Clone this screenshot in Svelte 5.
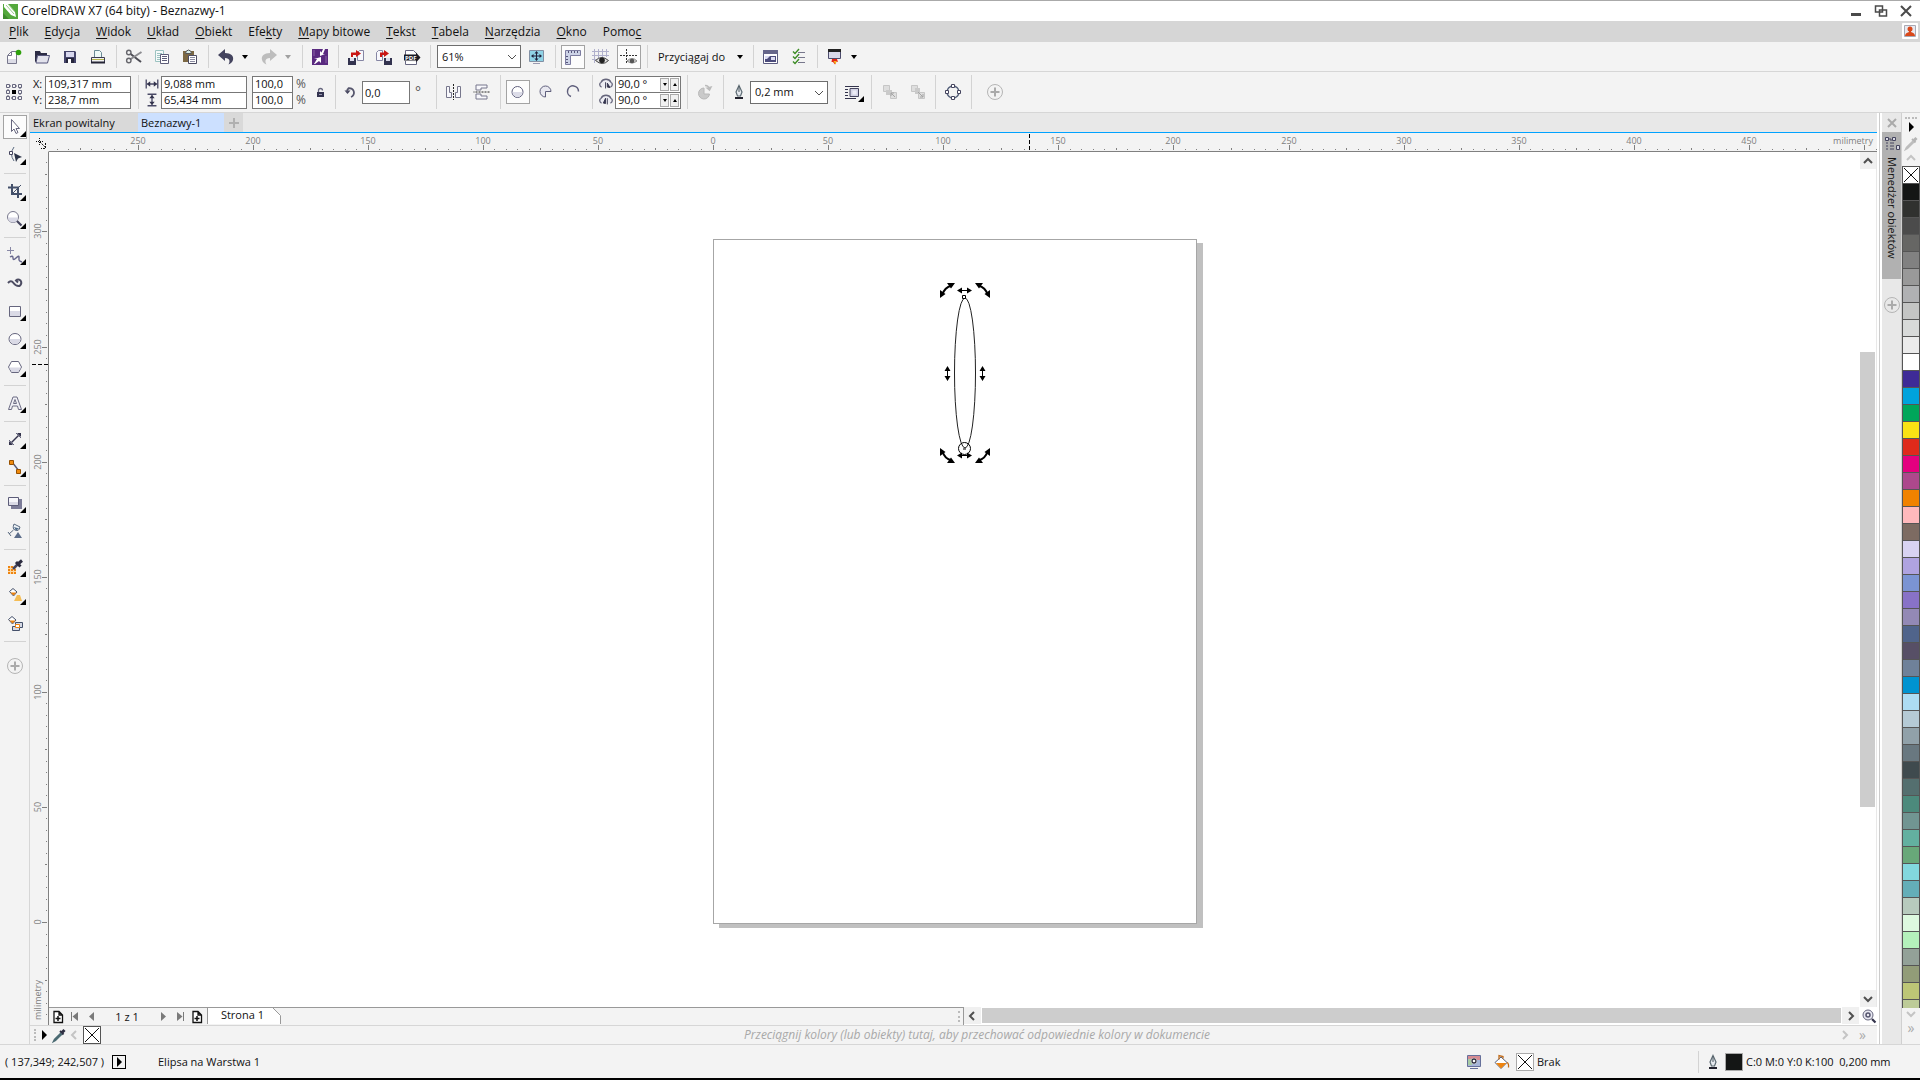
<script lang="ts">
  interface MenuItem {
    pre: string;
    key: string;
    post: string;
  }

  const menu: MenuItem[] = [
    { pre: '', key: 'P', post: 'lik' },
    { pre: '', key: 'E', post: 'dycja' },
    { pre: '', key: 'W', post: 'idok' },
    { pre: '', key: 'U', post: 'kład' },
    { pre: '', key: 'O', post: 'biekt' },
    { pre: 'Efe', key: 'k', post: 'ty' },
    { pre: '', key: 'M', post: 'apy bitowe' },
    { pre: '', key: 'T', post: 'ekst' },
    { pre: '', key: 'T', post: 'abela' },
    { pre: '', key: 'N', post: 'arzędzia' },
    { pre: '', key: 'O', post: 'kno' },
    { pre: 'Pomo', key: 'c', post: '' }
  ];

  // '|' is a separator
  const tools = [
    'pick', 'shape', '|', 'crop', 'zoom', '|', 'freehand', 'media', 'rect', 'ellipse', 'polygon', '|',
    'text', '|', 'dimension', 'connector', '|', 'shadow', 'glass', '|', 'dropper', 'fill', 'smartfill', '|'
  ];
  const noFlyout = ['media', 'glass', 'smartfill'];

  const swatches = [
    '#141615', '#30312f', '#4b4b4b', '#666664', '#818181', '#999999', '#b0b1b3', '#c4c5c4', '#d8dad9',
    '#ebebeb', '#ffffff', '#3e2b97', '#00a3dc', '#00a65a', '#fae214', '#df2a1b', '#e4007f', '#ad488c',
    '#f08200', '#ffb9bc', '#7d6b62', '#d8d3f2', '#afa3e0', '#7b94d3', '#8872c7', '#9389b5', '#50648b',
    '#574f66', '#6f8199', '#0093d0', '#addcf3', '#b5cad5', '#91a1a9', '#697880', '#3f4a4e', '#546f6f',
    '#4c8a7c', '#719592', '#63b0a0', '#68a879', '#82d8de', '#64aeb8', '#b7cabd', '#ddf9df', '#b4f1bb',
    '#93a198', '#929c78', '#bdc676', '#bdcb98'
  ];

  // pixels per millimetre at 61%
  const scale = 2.302;
  const originX = 664;
  const originY = 770;

  function ticks(from: number, to: number) {
    const out: number[] = [];
    for (let mm = from; mm <= to; mm += 5) out.push(mm);
    return out;
  }

  const hTicks = ticks(-285, 505);
  const vTicks = ticks(-45, 330);

  function tickLen(mm: number) {
    if (mm % 50 === 0) return 5;
    return mm % 25 === 0 ? 2 : 1;
  }

  // selection handles: x, y, rotation
  const rotateHandles = [[898.5, 138.5, 0], [933.5, 138.5, 90], [933.5, 303.5, 180], [898.5, 303.5, 270]];
  const skewHandles = [[915.5, 138.5, 0], [915.5, 303.5, 0], [898.5, 221.5, 90], [933.5, 221.5, 90]];

  let x = $state('109,317 mm');
  let y = $state('238,7 mm');
  let width = $state('9,088 mm');
  let height = $state('65,434 mm');
  let scaleX = $state('100,0');
  let scaleY = $state('100,0');
  let angle = $state('0,0');
  let start = $state('90,0 °');
  let end = $state('90,0 °');
  let zoom = $state('61%');
  let outline = $state('0,2 mm');
</script>

{#snippet icon(name: string)}
  <svg class="icon" viewBox="0 0 18 18" aria-hidden="true">
    {#if name === 'new'}
      <path d="M2.500 7.500L6.500 3.500H11.500V15.500H2.500Z" fill="#fff" stroke="#77778c" /><path d="M3 7.500H6.500V4" fill="none" stroke="#77778c" /><path d="M3 11h8v4H3z" fill="#dcdce6" /><circle cx="13.500" cy="4.500" r="2.800" fill="#2fa10c" />
    {:else if name === 'open'}
      <path d="M2 14V3h5l1 2h6v3" fill="#2c2c45" /><path d="M4.500 7.500h12l-2 7.500H3z" fill="#e2e2ec" stroke="#55557a" />
    {:else if name === 'save'}
      <path d="M3 3h11l1 1v11H3z" fill="#44446a" /><path d="M5 4h8v5H5z" fill="#d8d8ee" /><path d="M5 10h8v5H5z" fill="#26263c" /><path d="M7 11h3v4H7z" fill="#fff" />
    {:else if name === 'print'}
      <path d="M5.500 10V2.500h5l2 2V10" fill="#eef8f7" stroke="#6b8b95" /><path d="M2.500 9.500h13v5h-13z" fill="#f2f2f2" stroke="#3c3c50" /><path d="M3 11.500h12" stroke="#b4b44a" /><path d="M2 14.500h14" stroke="#252535" stroke-width="2" />
    {:else if name === 'cut'}
      <path d="M5 5.500l11 8.500" stroke="#4c4c54" stroke-width="2" /><path d="M5 11.500L16.500 4" stroke="#8c8c90" stroke-width="2" /><circle cx="3.800" cy="4.500" r="2.200" fill="none" stroke="#66666c" stroke-width="1.400" /><circle cx="3.800" cy="12.500" r="2.200" fill="none" stroke="#66666c" stroke-width="1.400" />
    {:else if name === 'copy'}
      <path d="M2.500 2.500h8v11h-8z" fill="#f5fafa" stroke="#9cc3c1" /><path d="M4 5.500h5M4 7.500h3M4 9.500h3M4 11.500h3" stroke="#9cc3c1" /><path d="M7.500 6.500h8v9h-8z" fill="#fff" stroke="#5d5d78" /><path d="M9 8.500h5M9 10.500h5M9 12.500h5" stroke="#5d5d78" />
    {:else if name === 'paste'}
      <path d="M2 3h11v11H2z" fill="#7c6843" /><path d="M4.500 5.500q0-3 3-3.500 3 .500 3 3.500z" fill="#d8ede8" stroke="#555" /><path d="M7.500 7.500h8v8h-8z" fill="#fff" stroke="#4c4c62" /><path d="M9 9.500h5M9 11.500h5M9 13.500h5" stroke="#8a8aa0" />
    {:else if name === 'undo' || name === 'redo'}
      <g transform={name === 'redo' ? 'matrix(-1 0 0 1 18 0)' : undefined} fill={name === 'redo' ? '#bdbdbd' : '#43435e'}>
        <path d="M1 7L8 1v4c6 0 9 3 8 7-.500 2-2.500 4-4.500 4.500 1.500-2.500 2-6.500-3.500-6.500v3z" />
      </g>
    {:else if name === 'connect'}
      <path d="M1 1h16v16H1z" fill="#5a2a80" /><path d="M12 1h2l-2 5h2l-5 2V3l1.500 1.500z" fill="#fff" /><path d="M4 16H3l3-5H3l7-2v6l-2-2z" fill="#fff" /><path d="M3 2v6M15 8v7" stroke="#8a63a8" />
    {:else if name === 'import'}
      <path d="M10.500 12.500V4.500l2-2h4v10z" fill="#f7f7fc" stroke="#8686a4" /><path d="M1 10h8v7H1z" fill="#33334f" /><path d="M3 10h4v3H3z" fill="#dcdcec" /><path d="M4 9V4.500h5V2l5 3.500L9 9V7H6v2z" fill="#c91515" />
    {:else if name === 'export'}
      <path d="M1.500 12.500V4.500l2-2h4v10z" fill="#f7f7fc" stroke="#8686a4" /><path d="M9 10h8v7H9z" fill="#33334f" /><path d="M11 10h4v3h-4z" fill="#dcdcec" /><path d="M5 9V4.500h4V2l5 3.500L9 9V7H7v2z" fill="#c91515" />
    {:else if name === 'pdf'}
      <path d="M2.500 7V2.500h8l3 3V7M2.500 13v3.500h11V14" fill="#fff" stroke="#666680" /><path d="M1 6.500h12v-2l4.500 5-4.500 5v-2H1z" fill="#1a1a24" /><text x="2" y="12" class="pdf">PDF</text>
    {:else if name === 'fullscreen'}
      <path d="M1.500 2.500h14v11h-14z" fill="#8fd3e6" stroke="#8290a4" /><path d="M8.500 4v8M4 8h9" stroke="#20203a" /><path d="M8.500 3l2 2.500h-4zM8.500 13l-2-2.500h4zM3 8l2.500-2v4zM14 8l-2.500-2v4z" fill="#20203a" /><path d="M5 15.500h7" stroke="#9a9ab0" />
    {:else if name === 'rulers'}
      <path d="M1.500 2.500h15v5h-10v9h-5z" fill="#ccd2e6" stroke="#7c7ca0" /><path d="M4.500 3v2M7.500 3v2M10.500 3v2M13.500 3v2M2 8.500h2M2 11.500h2M2 14.500h2" stroke="#55557a" />
    {:else if name === 'grid'}
      <path d="M2.500 1v14M6.500 1v14M10.500 1v8M14.500 1v8M0 3.500h17M0 7.500h17M0 11.500h4" stroke="#b1b1cc" />
      <path d="M3.500 12.500q6-6 13 0-6 6-13 0z" fill="#ddd" stroke="#444" /><circle cx="10" cy="12.300" r="2.800" fill="#222" />
    {:else if name === 'guides'}
      <path d="M6.500 1v15M0 7.500h17" stroke="#333" stroke-dasharray="2 1" /><path d="M7 13q5-5 10 0-5 4-10 0z" fill="#ccc" stroke="#888" /><circle cx="12" cy="13" r="2.300" fill="#555" />
    {:else if name === 'options'}
      <path d="M1.500 2.500h14v13h-14z" fill="#fff" stroke="#5c5c80" /><path d="M1 2h15v4H1z" fill="#66668a" /><path d="M3 8h11v6H3z" fill="#4c4c7c" /><path d="M3 8h5l-3 3H3zM9 9h4v3H9z" fill="#dcdcf2" />
    {:else if name === 'checklist'}
      <path d="M8 4.500h7M8 9.500h7M8 14.500h7" stroke="#77778c" /><path d="M3 3.500l2 2 4-4.500M3 8.500l2 2L9 6M3 13.500l2 2L9 11" fill="none" stroke="#3c8c24" stroke-width="1.400" />
    {:else if name === 'launch'}
      <path d="M2.500 1.500h12v9h-12z" fill="#d9d9e8" stroke="#4c4c6c" /><path d="M2 1h13v3H2z" fill="#222" /><path d="M6 11h5l1 3-1.500-.500L9 16.500 7 14l-1.500 0z" fill="#e42614" /><path d="M7.500 13h3l-1 3.500z" fill="#f7b51d" />
    {:else if name === 'position'}
      <path d="M3 3h12v12H3z" fill="none" stroke="#55556f" stroke-dasharray="1 1" /><g fill="#f3f3f3" stroke="#66667e"><path d="M1.500 1.500h3v3h-3zM7.500 1.500h3v3h-3zM13.500 1.500h3v3h-3zM1.500 7.500h3v3h-3zM13.500 7.500h3v3h-3zM1.500 13.500h3v3h-3zM7.500 13.500h3v3h-3zM13.500 13.500h3v3h-3z" /></g><path d="M7 7h4v4H7z" />
    {:else if name === 'wide'}
      <path d="M2.500 4v10M15.500 4v10M4 9h10" stroke="#4a4a66" stroke-width="1.500" /><path d="M3 9l4-3v6zM15 9l-4-3v6z" fill="#33334c" />
    {:else if name === 'tall'}
      <path d="M4 2.500h10M4 15.500h10M9 4v10" stroke="#4a4a66" stroke-width="1.500" /><path d="M9 3L6 7h6zM9 15l-3-4h6z" fill="#33334c" />
    {:else if name === 'lock'}
      <path d="M6 9h7v5H6z" fill="#33334f" /><path d="M7.500 9V7.500q0-2 2-2t2 2" fill="none" stroke="#66667e" stroke-width="1.300" /><path d="M8 11.500h3" stroke="#9a9ab4" />
    {:else if name === 'rotate'}
      <path d="M6 5.500a4.500 4.500 0 1 1 3 8.500" fill="none" stroke="#55556c" stroke-width="1.800" /><path d="M2.500 7.500h6L5.500 11z" fill="#44445c" /><path d="M5 9q0-3 2-4" fill="none" stroke="#55556c" stroke-width="1.800" />
    {:else if name === 'mirrorh' || name === 'mirrorv'}
      <g transform={name === 'mirrorv' ? 'rotate(90 8.500 9)' : undefined}>
        <path d="M1.500 3.500h3v6h2v5h-5zM15.500 3.500h-3v6h-2v5h5z" fill="#f8f8fc" stroke="#77778c" /><path d="M8.500 1v16" stroke="#222" stroke-dasharray="2 1" />
      </g>
    {:else if name === 'circle'}
      <circle cx="8.500" cy="9" r="5.500" fill="#fff" stroke="#5f5f7c" /><path d="M3.500 9h10a5 5 0 0 1-10 0z" fill="#dcdce8" />
    {:else if name === 'pie'}
      <path d="M8.500 14A5.500 5.500 0 1 1 14 8.500H8.500z" fill="#e8e8f0" stroke="#5f5f7c" />
    {:else if name === 'arc'}
      <path d="M6 13.500A5.500 5.500 0 1 1 13.500 8.500" fill="none" stroke="#5f5f7c" stroke-width="1.500" />
    {:else if name === 'angle1' || name === 'angle2'}
      <path d="M4 12.500a3 3 0 0 1-.500-5.500 6 5.500 0 0 1 11 0 3 3 0 0 1-.500 5.500" fill="#ededf3" stroke="#66667c" stroke-width="1.500" /><path d={name === 'angle1' ? 'M8.500 7v7M10.500 8l3 5-3-.500z' : 'M10.500 7v7M8.500 7v6l-2.500-.500z'} fill="#33334c" stroke="#33334c" />
    {:else if name === 'direction'}
      <path d="M8 5a5.500 5.500 0 1 0 5.500 6H8z" fill="#cacaca" stroke="#b8b8b8" /><path d="M9 2.500q4 0 4 4M11 5l2.500 2 1.500-3z" fill="none" stroke="#bbb" stroke-width="1.500" />
    {:else if name === 'pen'}
      <path d="M9 2.500L12 9l-1.500 4h-3L6 9z" fill="#e7ebf0" stroke="#5c6a72" stroke-width="1.200" /><path d="M9 3v6" stroke="#4c5960" /><path d="M5 14h8v2H5z" fill="#22222e" />
    {:else if name === 'wrap'}
      <path d="M1 3.500h14M1 6.500h3M1 9.500h3M1 12.500h3M1 15.500h11" stroke="#33334c" /><path d="M6 5.500h8.500v8H6z" fill="#d2d2e4" stroke="#44445e" /><path d="M8.500 7.500h4v4h-4z" fill="#ececf6" />
    {:else if name === 'front'}
      <path d="M3.500 2.500h6v6h-6zM10.500 9.500h6v6h-6z" fill="#dedede" stroke="#c6c6c6" /><path d="M6 7h6v5H6z" fill="#cacaca" /><path d="M15 14l-4-4M11 13v-3h3" stroke="#a4a4a4" fill="none" />
    {:else if name === 'back'}
      <path d="M3.500 2.500h6v6h-6zM10.500 9.500h6v6h-6z" fill="#dedede" stroke="#c6c6c6" /><path d="M7 5h5v6H7z" fill="#cacaca" /><path d="M10 9l5 5M15 11v3h-3" stroke="#a4a4a4" fill="none" />
    {:else if name === 'curves'}
      <circle cx="9" cy="9" r="6" fill="none" stroke="#55607a" stroke-width="1.400" /><g fill="#fff" stroke="#44445e"><path d="M7.500 1.500h3v3h-3zM7.500 13.500h3v3h-3zM1.500 7.500h3v3h-3zM13.500 7.500h3v3h-3z" /></g>
    {:else if name === 'plus'}
      <circle cx="9" cy="9" r="7.500" fill="none" stroke="#b5b5b5" /><path d="M9 4.500v9M4.500 9h9" stroke="#aaa" stroke-width="2" />
    {:else if name === 'pick'}
      <path d="M5.500 1.500v12l2.500-2.500 2 4.500 2-1-2-4h3.500z" fill="#fff" stroke="#66667e" />
    {:else if name === 'shape'}
      <path d="M8 1q-5 7 0 14" fill="none" stroke="#5a6a80" /><path d="M3.500 5.500h3v3h-3z" fill="#fff" stroke="#44445e" /><path d="M8 7l8 4-4 1.500L10 16z" fill="#2c3448" />
    {:else if name === 'crop'}
      <path d="M6 2v10h10M2 5.500h10V16" fill="none" stroke="#44506a" stroke-width="2" /><path d="M6 12l9-9" stroke="#44506a" />
    {:else if name === 'zoom'}
      <circle cx="7" cy="7" r="5.500" fill="#fff" stroke="#77778c" /><path d="M2 7.500h10a5 5 0 0 1-10 0z" fill="#d9d9e6" /><path d="M11 11l4.500 4.500" stroke="#44445e" stroke-width="2.200" />
    {:else if name === 'freehand'}
      <path d="M4.500 1v7M1 4.500h7" stroke="#8888a6" /><path d="M4 11q3-2 3 1t3 0 3-1 0 3 3 2" fill="none" stroke="#66668c" stroke-width="1.400" />
    {:else if name === 'media'}
      <path d="M2 9q3-3.500 5.500 0t6 3q3-2.500 1-5.500-2.500-2-4.500 0l2 2" fill="none" stroke="#4c4c62" stroke-width="2" />
    {:else if name === 'rect'}
      <path d="M3.500 4.500h11v10h-11z" fill="#fff" stroke="#66667e" /><path d="M4 9h10v5H4z" fill="#dadae6" />
    {:else if name === 'ellipse'}
      <ellipse cx="9" cy="9" rx="6" ry="5.500" fill="#fff" stroke="#66667e" /><path d="M3.500 9h11q-1 5-5.500 5T3.500 9z" fill="#dadae6" />
    {:else if name === 'polygon'}
      <path d="M2.500 9l3-5.500h7l3 5.500-3 5.500h-7z" fill="#fff" stroke="#66667e" /><path d="M3 9.500h12L12 14H6z" fill="#dadae6" />
    {:else if name === 'text'}
      <path d="M2.500 15.500L7 3h4l4.500 12.500h-3L11.500 12h-5l-1 3.500zM7.500 9.500h3L9 5.500z" fill="#f0f0f6" stroke="#6c6c84" />
    {:else if name === 'dimension'}
      <path d="M4 14L14 4" stroke="#33334c" stroke-width="1.500" /><path d="M3 10l5 5M10 3l5 5" stroke="#66667e" /><path d="M3 15v-4l4 4zM15 3v4l-4-4z" fill="#33334c" />
    {:else if name === 'connector'}
      <path d="M6 4l7 9" stroke="#55556e" stroke-width="1.300" /><path d="M3.500 2.500h4v4h-4zM10.500 11.500h4v4h-4z" fill="#f08a0c" stroke="#965000" />
    {:else if name === 'shadow'}
      <path d="M5 5h11v10H5z" fill="#7c7c98" /><path d="M2.500 3.500h10v8h-10z" fill="#f6f6fa" stroke="#5c5c78" /><path d="M3 8h9v3H3z" fill="#dadae6" />
    {:else if name === 'glass'}
      <path d="M8 2l6 3q-1 5-5 3-3-1-1-6zM7.500 8L3 12M2 10l3 4" fill="#edf2f7" stroke="#5a6a80" /><path d="M8 5l5 1.500-3 2z" fill="#4c6a88" /><path d="M12 10l4 6H8z" fill="#5c6d8a" />
    {:else if name === 'dropper'}
      <path d="M2 8h8v8H2z" fill="#ee8410" /><path d="M4.500 8v8M7.500 8v8M2 10.500h8M2 13.500h8" stroke="#fbd7a2" /><path d="M7 11l5-5" stroke="#44445c" stroke-width="2.500" /><path d="M10 4l4.500 4.500M12.500 5.500L16 2.500" stroke="#2c2c40" stroke-width="3" />
    {:else if name === 'fill'}
      <path d="M3.500 5.500l3.500-3 4 3.500-3.500 4z" fill="#fff" stroke="#44506a" /><path d="M4.500 6.500h6L7.500 9.500z" fill="#ee8410" /><path d="M11 9h3l2 6H8z" fill="#f5bd55" />
    {:else if name === 'smartfill'}
      <path d="M2.500 5.500l3.500-3 4 3.500-3.500 4z" fill="#fff" stroke="#44506a" /><path d="M3.500 6.500h6L6.500 9.500z" fill="#ee8410" /><path d="M9.500 8.500h7v5h-3v3h-7v-4h3z" fill="#d5d9e5" stroke="#44506a" /><path d="M9.500 10.500h4v3h-4z" fill="#fff" stroke="#ee8410" />
    {:else if name === 'newpage'}
      <path d="M5 3.500h5l3.500 3.500v7.500H5zM10 3.500V7h3.500" fill="#fff" stroke="#111" stroke-width="1.300" /><path d="M9 8v5M6.500 10.500h5" stroke="#111" stroke-width="1.500" />
    {:else if name === 'first' || name === 'last'}
      <g transform={name === 'last' ? 'matrix(-1 0 0 1 18 0)' : undefined}><path d="M12 4v9L6.500 8.500z" fill="#7a7a7a" /><path d="M5.500 4v9" stroke="#7a7a7a" /></g>
    {:else if name === 'prev'}
      <path d="M11 4v9L6 8.500z" fill="#7a7a7a" />
    {:else if name === 'next'}
      <path d="M7 4v9l5-4.500z" fill="#7a7a7a" />
    {:else if name === 'eyedropper' || name === 'eyedropperoff'}
      <g stroke={name === 'eyedropper' ? '#2e2e42' : '#b4b4b4'}><path d="M10 5l3.500 3.500" stroke-width="2" /><path d="M12 6.500L14.500 4" stroke-width="3" /></g><path d="M11 7l-6.500 6.500-1 2 2-1L12 8" fill="none" stroke={name === 'eyedropper' ? '#4a6a72' : '#bdbdbd'} stroke-width="1.500" />
    {:else if name === 'navigator'}
      <circle cx="8" cy="8" r="5" fill="#e8e8f2" stroke="#66667e" /><circle cx="8" cy="8" r="2" fill="none" stroke="#55556e" stroke-width="1.500" /><path d="M12 12l3.500 3.500" stroke="#33334c" stroke-width="2.200" />
    {:else if name === 'monitor'}
      <path d="M2.500 2.500h13v11h-13z" fill="#a7b6d8" stroke="#66709a" /><path d="M3 3h12v4H3z" fill="#d68b92" /><path d="M3 6h4v6H3z" fill="#a7cba4" /><circle cx="9" cy="8" r="3" fill="#fff" /><circle cx="9" cy="8" r="2" fill="#fff" stroke="#2c2c3c" stroke-width="1.300" /><path d="M5 15.500h8" stroke="#66709a" />
    {:else if name === 'bucket'}
      <path d="M2 9.500L8 4l6 5.500-6 6z" fill="#fff" stroke="#55607a" /><path d="M3 10h10.500L8 15.500z" fill="#ee8410" /><path d="M6 6.500V2.500l4 1v2M14 9.500q2 1 1.500 5" fill="none" stroke="#c06a18" stroke-width="1.300" />
    {:else if name === 'docker'}
      <path d="M2.500 2.500h3v3h-3zM9.500 2.500h3v3h-3zM13.500 10.500h3v4h-3z" fill="#d8d8e4" stroke="#44445e" /><path d="M4 7v9M8 4v12M10 7v9M6 4h3" stroke="#44445e" stroke-dasharray="2 1" />
    {/if}
  </svg>
{/snippet}

{#snippet chevron(dir: string)}
  <svg class="chevron {dir}" viewBox="0 0 12 12" aria-hidden="true"><path d="M2 4l4 4 4-4" /></svg>
{/snippet}

{#snippet tool(name: string, label: string, active = false)}
  <button type="button" class="tool" class:active title={label} aria-label={label}>{@render icon(name)}</button>
{/snippet}

<div class="app">
  <header class="titlebar">
    <svg class="logo" viewBox="0 0 15 15" aria-hidden="true">
      <path d="M0 0h15v15H0z" fill="#54a83c" /><path d="M1 0h4l7 8 1 5-5-2-7-8z" fill="#fff" /><path d="M3 1l8 9M5 0l7 8" stroke="#9ccc8d" /><path d="M0 9l6 6H0z" fill="#3d8a2c" />
    </svg>
    <h1>CorelDRAW X7 (64 bity) - Beznazwy-1</h1>
    <div class="window-controls">
      <button type="button" aria-label="Minimalizuj"><svg viewBox="0 0 14 14"><path d="M2 10.500h10" stroke-width="3" /></svg></button>
      <button type="button" aria-label="Przywróć"><svg viewBox="0 0 14 14"><path d="M1.500 2h7v6h-7zM5.500 6h7v6h-7z" fill="#fff" stroke-width="1.500" /></svg></button>
      <button type="button" aria-label="Zamknij"><svg viewBox="0 0 14 14"><path d="M2 2l10 10M12 2L2 12" stroke-width="2" /></svg></button>
    </div>
  </header>

  <nav class="menubar">
    {#each menu as item}
      <button type="button">{item.pre}<u>{item.key}</u>{item.post}</button>
    {/each}
    <button type="button" class="account" aria-label="Konto">
      <svg viewBox="0 0 16 16"><path d="M.5.5h15v15H.5z" fill="#fff" stroke="#fff" /><path d="M2.500 2.500h11v11h-11z" fill="#e9e9ef" stroke="#a9a9b4" /><circle cx="8" cy="6" r="2.500" fill="#d9481a" /><path d="M3 13q0-3 4-4V7h2v2q4 1 4 4z" fill="#d9481a" /></svg>
    </button>
  </nav>

  <div class="toolbar standard">
    {@render tool('new', 'Nowy')}
    {@render tool('open', 'Otwórz')}
    {@render tool('save', 'Zapisz')}
    {@render tool('print', 'Drukuj')}
    <span class="sep"></span>
    {@render tool('cut', 'Wytnij')}
    {@render tool('copy', 'Kopiuj')}
    {@render tool('paste', 'Wklej')}
    <span class="sep"></span>
    {@render tool('undo', 'Cofnij')}
    <button type="button" class="drop" aria-label="Lista cofania"><i class="caret"></i></button>
    {@render tool('redo', 'Przywróć')}
    <button type="button" class="drop" aria-label="Lista przywracania"><i class="caret dim"></i></button>
    <span class="sep"></span>
    {@render tool('connect', 'Wyszukaj zawartość')}
    <span class="sep"></span>
    {@render tool('import', 'Importuj')}
    {@render tool('export', 'Eksportuj')}
    {@render tool('pdf', 'Publikuj do formatu PDF')}
    <span class="sep"></span>
    <label class="combo zoom-level">
      <select bind:value={zoom} aria-label="Powiększenie"><option>61%</option><option>100%</option></select>
      {@render chevron('down')}
    </label>
    {@render tool('fullscreen', 'Podgląd pełnoekranowy')}
    <span class="sep"></span>
    {@render tool('rulers', 'Pokaż linijki', true)}
    {@render tool('grid', 'Pokaż siatkę')}
    {@render tool('guides', 'Pokaż prowadnice', true)}
    <span class="sep"></span>
    <button type="button" class="snap">Przyciągaj do <i class="caret"></i></button>
    <span class="sep"></span>
    {@render tool('options', 'Opcje')}
    {@render tool('checklist', 'Uruchamianie')}
    <span class="sep"></span>
    {@render tool('launch', 'Uruchom')}
    <button type="button" class="drop" aria-label="Lista aplikacji"><i class="caret"></i></button>
  </div>

  <div class="toolbar property">
    {@render tool('position', 'Położenie obiektu')}
    <div class="pair names"><label for="pos-x">X:</label><label for="pos-y">Y:</label></div>
    <div class="pair fields">
      <input id="pos-x" type="text" bind:value={x}>
      <input id="pos-y" type="text" bind:value={y}>
    </div>
    <span class="sep"></span>
    <div class="pair marks">{@render icon('wide')}{@render icon('tall')}</div>
    <div class="pair fields">
      <input type="text" aria-label="Szerokość" bind:value={width}>
      <input type="text" aria-label="Wysokość" bind:value={height}>
    </div>
    <div class="pair fields percent">
      <input type="text" aria-label="Skala pozioma" bind:value={scaleX}>
      <input type="text" aria-label="Skala pionowa" bind:value={scaleY}>
    </div>
    <div class="pair units"><span>%</span><span>%</span></div>
    <button type="button" class="tool narrow" aria-label="Zablokuj proporcje">{@render icon('lock')}</button>
    <span class="sep"></span>
    <span class="mark">{@render icon('rotate')}</span>
    <input class="angle" type="text" aria-label="Kąt obrotu" bind:value={angle}>
    <span class="degree">°</span>
    <span class="sep"></span>
    {@render tool('mirrorh', 'Odbij w poziomie')}
    {@render tool('mirrorv', 'Odbij w pionie')}
    <span class="sep"></span>
    {@render tool('circle', 'Elipsa', true)}
    {@render tool('pie', 'Wycinek')}
    {@render tool('arc', 'Łuk')}
    <span class="sep"></span>
    <div class="pair marks">{@render icon('angle1')}{@render icon('angle2')}</div>
    <div class="pair fields spins">
      <div class="spin">
        <input type="text" aria-label="Kąt początkowy" bind:value={start}>
        <button type="button" aria-label="Mniej"><i class="caret small"></i></button>
        <button type="button" aria-label="Więcej"><i class="caret small up"></i></button>
      </div>
      <div class="spin">
        <input type="text" aria-label="Kąt końcowy" bind:value={end}>
        <button type="button" aria-label="Mniej"><i class="caret small"></i></button>
        <button type="button" aria-label="Więcej"><i class="caret small up"></i></button>
      </div>
    </div>
    <span class="sep"></span>
    {@render tool('direction', 'Zmień kierunek')}
    <span class="sep"></span>
    <span class="mark">{@render icon('pen')}</span>
    <label class="combo outline-width">
      <select bind:value={outline} aria-label="Szerokość konturu"><option>0,2 mm</option><option>0,5 mm</option></select>
      {@render chevron('down')}
    </label>
    <span class="sep"></span>
    <button type="button" class="tool flyout" aria-label="Zawijaj tekst">{@render icon('wrap')}</button>
    <span class="sep"></span>
    {@render tool('front', 'Na wierzch')}
    {@render tool('back', 'Na spód')}
    <span class="sep"></span>
    {@render tool('curves', 'Przekształć w krzywe')}
    <span class="sep"></span>
    <span class="gap"></span>
    {@render tool('plus', 'Dostosuj')}
  </div>

  <main class="main">
    <aside class="toolbox">
      {#each tools as name, i}
        {#if name === '|'}
          <span class="hsep"></span>
        {:else}
          <button type="button" class="tool" class:active={i === 0} class:flyout={!noFlyout.includes(name)} aria-label={name}>
            {@render icon(name)}
          </button>
        {/if}
      {/each}
      <span class="gap"></span>
      {@render tool('plus', 'Dostosuj')}
    </aside>

    <section class="document">
      <div class="tabs">
        <button type="button" class="tab">Ekran powitalny</button>
        <button type="button" class="tab current">Beznazwy-1</button>
        <button type="button" class="tab add" aria-label="Nowa karta">
          <svg viewBox="0 0 12 12"><path d="M6 1v10M1 6h10" stroke="#b0b0b0" stroke-width="2" /></svg>
        </button>
      </div>

      <div class="ruler-row">
        <svg class="corner" viewBox="0 0 18 18" aria-hidden="true">
          <path d="M9.500 5v8M6 8.500h8" stroke="#111" stroke-dasharray="1 1" /><path d="M10 9l5 5M15.500 10v5.500H11" fill="none" stroke="#111" stroke-dasharray="2 1" />
        </svg>
        <svg class="hruler">
          {#each hTicks as mm}
            <rect x={Math.round(originX + mm * scale)} y={17 - tickLen(mm)} width="1" height={tickLen(mm)} />
            {#if mm % 50 === 0 && mm < 500}
              <text x={Math.round(originX + mm * scale)} y="11">{Math.abs(mm)}</text>
            {/if}
          {/each}
          <text class="unit" x="100%" y="11">milimetry</text>
          <path class="pointer" d="M980.500 1v17" />
        </svg>
      </div>

      <div class="middle">
        <svg class="vruler">
          {#each vTicks as mm}
            <rect x={17 - tickLen(mm)} y={Math.round(originY - mm * scale)} width={tickLen(mm)} height="1" />
            {#if mm % 50 === 0}
              <text transform="translate(11 {Math.round(originY - mm * scale)}) rotate(-90)">{Math.abs(mm)}</text>
            {/if}
          {/each}
          <svg y="100%" overflow="visible"><text class="unit" transform="translate(11 -5) rotate(-90)">milimetry</text></svg>
          <path class="pointer" d="M2 212.500h16" />
        </svg>

        <div class="view">
          <div class="view-row">
            <svg class="canvas" role="img" aria-label="Strona 1">
              <rect x="670" y="91" width="484" height="685" fill="#c0c0c0" />
              <rect x="664.500" y="87.500" width="483" height="684" fill="#fff" stroke="#a6a6a6" />
              <ellipse cx="916" cy="221" rx="10.500" ry="75" fill="none" stroke="#222" />
              <path d="M913.500 143.500h3v3h-3z" fill="#fff" stroke="#000" />
              <circle cx="915.500" cy="296.500" r="6" fill="none" stroke="#000" />
              <path d="M914 297h3" stroke="#000" />
              {#each rotateHandles as [cx, cy, turn]}
                <g transform="translate({cx} {cy}) rotate({turn})">
                  <path d="M-5 4Q-3-3 4-5" fill="none" stroke="#000" stroke-width="2" /><path d="M-7.500 7.500v-8l5.500 4zM7.500-7.500h-8l4 5.500z" />
                </g>
              {/each}
              {#each skewHandles as [cx, cy, turn]}
                <g transform="translate({cx} {cy}) rotate({turn})">
                  <path d="M-6 0H6" stroke="#000" /><path d="M-7.500 0l5-3v6zM7.500 0l-5-3v6z" />
                </g>
              {/each}
            </svg>
            <div class="scroll vertical">
              <button type="button" aria-label="W górę">{@render chevron('up')}</button>
              <span class="space"></span><span class="thumb"></span><span class="space"></span>
              <button type="button" aria-label="W dół">{@render chevron('down')}</button>
            </div>
          </div>

          <div class="bottom-row">
            <div class="pages">
              <button type="button" aria-label="Dodaj stronę przed">{@render icon('newpage')}</button>
              <button type="button" aria-label="Pierwsza strona">{@render icon('first')}</button>
              <button type="button" aria-label="Poprzednia strona">{@render icon('prev')}</button>
              <span class="page-count">1 z 1</span>
              <button type="button" aria-label="Następna strona">{@render icon('next')}</button>
              <button type="button" aria-label="Ostatnia strona">{@render icon('last')}</button>
              <button type="button" aria-label="Dodaj stronę po">{@render icon('newpage')}</button>
              <button type="button" class="page-tab">
                Strona 1
                <svg class="fold" viewBox="0 0 8 16" aria-hidden="true"><path d="M0 0h8v7z" fill="#f3f3f3" /><path d="M0 0l7.500 7.500V16" fill="none" stroke="#999" /></svg>
              </button>
              <span class="grip"></span>
            </div>
            <div class="scroll horizontal">
              <button type="button" aria-label="W lewo">{@render chevron('left')}</button>
              <span class="thumb"></span>
              <button type="button" aria-label="W prawo">{@render chevron('right')}</button>
              <button type="button" class="navigator" aria-label="Nawigator">{@render icon('navigator')}</button>
            </div>
          </div>
        </div>
      </div>

      <div class="doc-palette">
        <span class="grip"></span>
        <i class="play"></i>
        {@render icon('eyedropper')}
        {@render chevron('left dim')}
        <button type="button" class="swatch none" aria-label="Brak koloru"><svg viewBox="0 0 16 16"><path d="M1 1l14 14M15 1L1 15" /></svg></button>
        <p>Przeciągnij kolory (lub obiekty) tutaj, aby przechować odpowiednie kolory w dokumencie</p>
        {@render chevron('right dim')}
        <span class="more">»</span>
      </div>
    </section>

    <div class="splitter"></div>

    <aside class="docker">
      <button type="button" class="close" aria-label="Zamknij okno dokowane"><svg viewBox="0 0 12 12"><path d="M2 2l8 8M10 2l-8 8" /></svg></button>
      <button type="button" class="docker-tab">{@render icon('docker')}<span>Menedżer obiektów</span></button>
      {@render tool('plus', 'Dodaj okno dokowane')}
    </aside>

    <aside class="palette">
      <span class="grip"></span>
      <i class="play"></i>
      {@render icon('eyedropperoff')}
      {@render chevron('up dim')}
      <div class="colors">
        <button type="button" class="swatch none" aria-label="Brak koloru"><svg viewBox="0 0 16 16"><path d="M1 1l14 14M15 1L1 15" /></svg></button>
        {#each swatches as color}
          <button type="button" class="swatch" style:background={color} aria-label={color}></button>
        {/each}
      </div>
      {@render chevron('down dim')}
      <span class="more">»</span>
    </aside>
  </main>

  <footer class="status">
    <span class="coords">( 137,349; 242,507 )</span>
    <button type="button" class="boxed" aria-label="Ustawienia kursora"><i class="play"></i></button>
    <span class="selection">Elipsa na Warstwa 1</span>
    <div class="fill-info">
      <span class="cell">{@render icon('monitor')}</span>
      <span class="cell">{@render icon('bucket')}</span>
      <span class="chip none"><svg viewBox="0 0 16 16"><path d="M1 1l14 14M15 1L1 15" /></svg></span>
      <span class="name">Brak</span>
    </div>
    <div class="outline-info">
      <span class="cell">{@render icon('pen')}</span>
      <span class="chip black"></span>
      <span class="name">C:0 M:0 Y:0 K:100&nbsp; 0,200 mm</span>
    </div>
  </footer>
</div>

<style>
  :global(body) {
    margin: 0;
    background: #000;
  }

  .app {
    display: flex;
    flex-direction: column;
    height: 100vh;
    box-sizing: border-box;
    border-bottom: 2px solid #000;
    background: #f3f3f3;
    color: #111;
    font: 11px/16px "Open Sans", "Noto Sans", sans-serif;
    overflow: hidden;
  }

  .app :global(*) {
    box-sizing: border-box;
  }

  button,
  input,
  select {
    margin: 0;
    padding: 0;
    border: 0;
    border-radius: 0;
    background: none;
    color: inherit;
    font: inherit;
  }

  .icon {
    display: block;
    width: 18px;
    height: 18px;
    flex: none;
  }

  .pdf {
    font: bold 6px "Open Sans", sans-serif;
    fill: #fff;
  }

  .chevron {
    display: block;
    width: 12px;
    height: 12px;
    flex: none;
    fill: none;
    stroke: #505050;
    stroke-width: 2;
  }

  .chevron.up {
    transform: rotate(180deg);
  }

  .chevron.left {
    transform: rotate(90deg);
  }

  .chevron.right {
    transform: rotate(-90deg);
  }

  .chevron.dim {
    stroke: #c4c4c4;
  }

  .caret {
    display: inline-block;
    border: 3px solid transparent;
    border-top: 4px solid #000;
    border-bottom: 0;
  }

  .caret.dim {
    border-top-color: #a0a0a0;
  }

  .caret.up {
    border-top: 0;
    border-bottom: 4px solid #000;
  }

  .play {
    display: block;
    flex: none;
    border: 5px solid transparent;
    border-left-color: #000;
    border-right: 0;
  }

  .more {
    color: #aaa;
    font-size: 14px;
  }

  /* title and menu */
  .titlebar {
    display: flex;
    align-items: center;
    height: 21px;
    padding-left: 3px;
    border-top: 1px solid #aaa;
    background: #fff;
  }

  .logo {
    width: 15px;
    height: 15px;
    margin-right: 3px;
  }

  h1 {
    margin: 0;
    font-size: 12px;
    font-weight: 400;
  }

  .window-controls {
    display: flex;
    margin-left: auto;
    padding-right: 2px;
  }

  .window-controls button {
    display: grid;
    place-items: center;
    width: 25px;
    height: 18px;
  }

  .window-controls svg {
    width: 14px;
    height: 14px;
    fill: none;
    stroke: #4a4a4a;
  }

  .menubar {
    display: flex;
    height: 21px;
    padding-left: 1px;
    background: #d6d6d6;
    font-size: 12px;
  }

  .menubar button {
    padding: 0 8px;
  }

  .menubar u {
    text-underline-offset: 2px;
  }

  .menubar .account {
    width: 16px;
    height: 16px;
    margin: 2px 2px 0 auto;
    padding: 0;
  }

  .account svg {
    display: block;
  }

  /* toolbars */
  .toolbar {
    display: flex;
    align-items: center;
    flex: none;
    border-bottom: 1px solid #d6d6d6;
  }

  .standard {
    height: 30px;
  }

  .property {
    height: 41px;
  }

  .sep {
    flex: none;
    align-self: stretch;
    width: 1px;
    margin: 3px 3px 3px 4px;
    background: #d3d3d3;
  }

  .tool {
    position: relative;
    display: grid;
    place-items: center;
    flex: none;
    width: 24px;
    height: 24px;
    margin: 2px;
    border: 1px solid transparent;
  }

  .tool.active {
    border-color: #a3a3a3;
    background: #fcfcfc;
  }

  .tool.narrow {
    width: 19px;
  }

  .tool.flyout::after {
    content: "";
    position: absolute;
    right: 0;
    bottom: 1px;
    border: 3px solid #000;
    border-top-color: transparent;
    border-left-color: transparent;
  }

  .drop {
    display: flex;
    align-items: center;
    width: 15px;
    height: 24px;
    padding-left: 2px;
  }

  .combo {
    position: relative;
    display: flex;
    height: 23px;
  }

  .combo select {
    width: 100%;
    padding-left: 4px;
    border: 1px solid #6e6e6e;
    background: #fff;
    appearance: none;
  }

  .combo .chevron {
    position: absolute;
    top: 6px;
    right: 3px;
    stroke-width: 1;
    pointer-events: none;
  }

  .zoom-level {
    width: 84px;
    margin: 0 2px 0 3px;
  }

  .outline-width {
    width: 78px;
    margin-right: 3px;
  }

  .snap {
    display: flex;
    align-items: center;
    justify-content: space-between;
    width: 98px;
    height: 24px;
    padding: 0 6px 0 7px;
  }

  .pair {
    display: grid;
    grid-template-rows: 16px 16px;
    flex: none;
  }

  .names {
    width: 17px;
    padding-left: 5px;
  }

  .fields {
    width: 86px;
    margin-right: 3px;
    grid-template-rows: 17px 16px;
  }

  .fields > * {
    width: 100%;
    min-width: 0;
    border: 1px solid #777;
    border-top-width: 0;
    background: #fff;
  }

  .fields > :first-child {
    border-top-width: 1px;
  }

  .fields > input {
    padding-left: 2px;
  }

  .marks {
    width: 19px;
    justify-items: center;
    align-items: center;
  }

  .marks .icon {
    width: 16px;
    height: 16px;
  }

  .percent {
    width: 41px;
    margin: 0 3px 0 2px;
  }

  .units {
    width: 12px;
    color: #555;
    font-size: 12px;
  }

  .mark {
    display: grid;
    place-items: center;
    width: 23px;
  }

  .angle {
    width: 48px;
    height: 23px;
    padding-left: 2px;
    border: 1px solid #777;
    background: #fff;
  }

  .degree {
    width: 22px;
    padding-left: 5px;
    color: #555;
    font-size: 14px;
  }

  .spins {
    width: 66px;
    margin-right: 2px;
  }

  .spin {
    display: flex;
    align-items: center;
    padding-right: 1px;
  }

  .spin input {
    flex: 1;
    min-width: 0;
    padding-left: 2px;
  }

  .spin button {
    display: grid;
    place-items: center;
    width: 9px;
    height: 13px;
    margin-left: 1px;
    border: 1px solid #aaa;
    background: #f0f0f0;
  }

  .caret.small {
    border-width: 2px;
    border-top-width: 3px;
    border-bottom-width: 0;
  }

  .caret.small.up {
    border-top-width: 0;
    border-bottom-width: 3px;
  }

  .gap {
    flex: none;
    width: 6px;
    height: 7px;
  }

  /* work area */
  .main {
    display: flex;
    flex: 1;
    min-height: 0;
  }

  .toolbox {
    display: flex;
    flex-direction: column;
    width: 30px;
    flex: none;
    border-right: 1px solid #d6d6d6;
  }

  .toolbox .tool {
    margin: 2px 0 2px 3px;
  }

  .hsep {
    height: 1px;
    margin: 4px 3px 3px 4px;
    background: #d3d3d3;
  }

  .document {
    display: flex;
    flex-direction: column;
    flex: 1;
    min-width: 0;
  }

  .tabs {
    display: flex;
    height: 20px;
    flex: none;
    border-bottom: 1px solid #00a2ff;
    background: #e8e8e8;
  }

  .tab {
    width: 108px;
    padding: 0 0 0 3px;
    background: #d9d9d9;
    text-align: left;
  }

  .tab.current {
    width: 86px;
    background: #cce0ff;
  }

  .tab.add {
    display: grid;
    place-items: center;
    width: 19px;
    padding: 0;
  }

  .tab.add svg {
    width: 12px;
    height: 12px;
  }

  .ruler-row {
    display: flex;
    height: 19px;
    flex: none;
  }

  .corner {
    width: 18px;
    height: 18px;
    flex: none;
  }

  .hruler {
    flex: 1;
    min-width: 0;
    height: 19px;
    border-bottom: 1px solid #808080;
    border-left: 1px solid transparent;
  }

  .hruler,
  .vruler {
    fill: #808080;
    font-size: 9px;
    text-anchor: middle;
  }

  .hruler .unit {
    text-anchor: end;
    transform: translateX(-4px);
  }

  .vruler .unit {
    text-anchor: start;
  }

  .pointer {
    stroke: #000;
    stroke-dasharray: 4 2;
  }

  .middle {
    display: flex;
    flex: 1;
    min-height: 0;
  }

  .vruler {
    width: 19px;
    height: 100%;
    flex: none;
    border-right: 1px solid #808080;
  }

  .view {
    display: flex;
    flex-direction: column;
    flex: 1;
    min-width: 0;
  }

  .view-row {
    display: flex;
    flex: 1;
    min-height: 0;
    background: #fff;
  }

  .canvas {
    flex: 1;
    min-width: 0;
    height: 100%;
  }

  .scroll {
    display: flex;
    background: #fff;
  }

  .scroll button {
    display: grid;
    place-items: center;
    width: 17px;
    height: 17px;
    flex: none;
    background: #f0f0f0;
  }

  .thumb {
    background: #cdcdcd;
  }

  .vertical {
    flex-direction: column;
    width: 17px;
    border-right: 1px solid #e8e8e8;
  }

  .vertical button {
    width: 16px;
  }

  .vertical .thumb {
    flex: 455;
    width: 15px;
  }

  .space {
    flex: 183;
  }

  .horizontal {
    flex: 914;
  }

  .horizontal .thumb {
    flex: 1;
    height: 15px;
    margin: 1px 1px 0;
  }

  .scroll .navigator {
    margin-left: 1px;
    background: #fff;
  }

  .bottom-row {
    display: flex;
    height: 18px;
    flex: none;
  }

  .pages {
    display: flex;
    flex: 914;
    border-top: 1px solid #999;
    border-right: 1px solid #999;
  }

  .pages button {
    width: 17px;
    flex: none;
  }

  .page-count {
    width: 54px;
    line-height: 18px;
    text-align: center;
  }

  .pages .page-tab {
    display: flex;
    justify-content: flex-end;
    gap: 9px;
    width: 74px;
    height: 16px;
    margin-left: 2px;
    border-left: 1px solid #999;
    background: #fff;
    line-height: 14px;
  }

  .fold {
    width: 8px;
    height: 16px;
    flex: none;
  }

  .grip {
    width: 2px;
    border-left: 2px dotted #bbb;
  }

  .pages .grip {
    margin: 3px 3px 3px auto;
  }

  .doc-palette {
    display: flex;
    align-items: center;
    height: 19px;
    flex: none;
    padding: 0 11px 0 4px;
    border-top: 1px solid #d6d6d6;
  }

  .doc-palette .grip {
    height: 12px;
    margin-right: 6px;
  }

  .doc-palette .icon {
    margin: 0 0 0 3px;
  }

  .doc-palette .swatch {
    margin: 0 0 0 3px;
  }

  .doc-palette p {
    flex: 1;
    margin: 0;
    padding-left: 14px;
    color: #a8a8a8;
    font-size: 12px;
    font-style: italic;
    text-align: center;
  }

  .doc-palette .more {
    margin-left: 8px;
  }

  .swatch {
    display: block;
    width: 18px;
    height: 18px;
    flex: none;
    border: 1px solid #555;
    background: #fff;
  }

  .none svg {
    display: block;
    width: 100%;
    height: 100%;
    stroke: #111;
  }

  .splitter {
    width: 5px;
    flex: none;
    border: solid #fff;
    border-width: 0 2px;
    background: #ccc;
  }

  .docker {
    display: flex;
    flex-direction: column;
    width: 19px;
    flex: none;
    background: #e8e8e8;
  }

  .close {
    display: grid;
    place-items: center;
    height: 19px;
  }

  .close svg {
    width: 12px;
    height: 12px;
    stroke: #aaa;
    stroke-width: 2;
  }

  .docker-tab {
    display: flex;
    flex-direction: column;
    align-items: center;
    gap: 4px;
    width: 19px;
    height: 147px;
    padding-top: 3px;
    background: #b1b1b1;
  }

  .docker-tab span {
    writing-mode: vertical-rl;
  }

  .docker .tool {
    width: 19px;
    margin: 14px 0 0;
  }

  .palette {
    display: flex;
    flex-direction: column;
    align-items: center;
    width: 19px;
    flex: none;
    border-left: 1px solid #d0d0d0;
  }

  .palette .grip {
    width: 12px;
    height: 2px;
    margin-top: 4px;
    border: 0;
    border-top: 2px dotted #bbb;
  }

  .palette .play {
    margin: 3px 0 2px;
  }

  .colors {
    align-self: stretch;
    flex: 1;
    min-height: 0;
    margin-top: 2px;
    overflow: hidden;
  }

  .colors .swatch {
    height: 17px;
    border-bottom-width: 0;
  }

  .palette .more {
    height: 24px;
  }

  /* status bar */
  .status {
    display: flex;
    align-items: center;
    height: 34px;
    flex: none;
    padding-left: 5px;
    border-top: 1px solid #d6d6d6;
  }

  .coords {
    width: 107px;
  }

  .boxed {
    display: grid;
    place-items: center;
    width: 14px;
    height: 14px;
    border: 1px solid #000;
  }

  .selection {
    margin-left: 32px;
  }

  .fill-info,
  .outline-info {
    display: flex;
    align-items: center;
  }

  .fill-info {
    width: 238px;
    margin-left: auto;
  }

  .outline-info {
    width: 222px;
    height: 22px;
    padding-left: 2px;
    border-left: 1px solid #d3d3d3;
  }

  .cell {
    display: grid;
    place-items: center;
    width: 28px;
  }

  .outline-info .cell {
    width: 24px;
  }

  .chip {
    width: 18px;
    height: 18px;
    border: 1px solid #aaa;
    background: #fff;
  }

  .chip.black {
    background: #141615;
  }

  .name {
    margin-left: 3px;
  }
</style>
